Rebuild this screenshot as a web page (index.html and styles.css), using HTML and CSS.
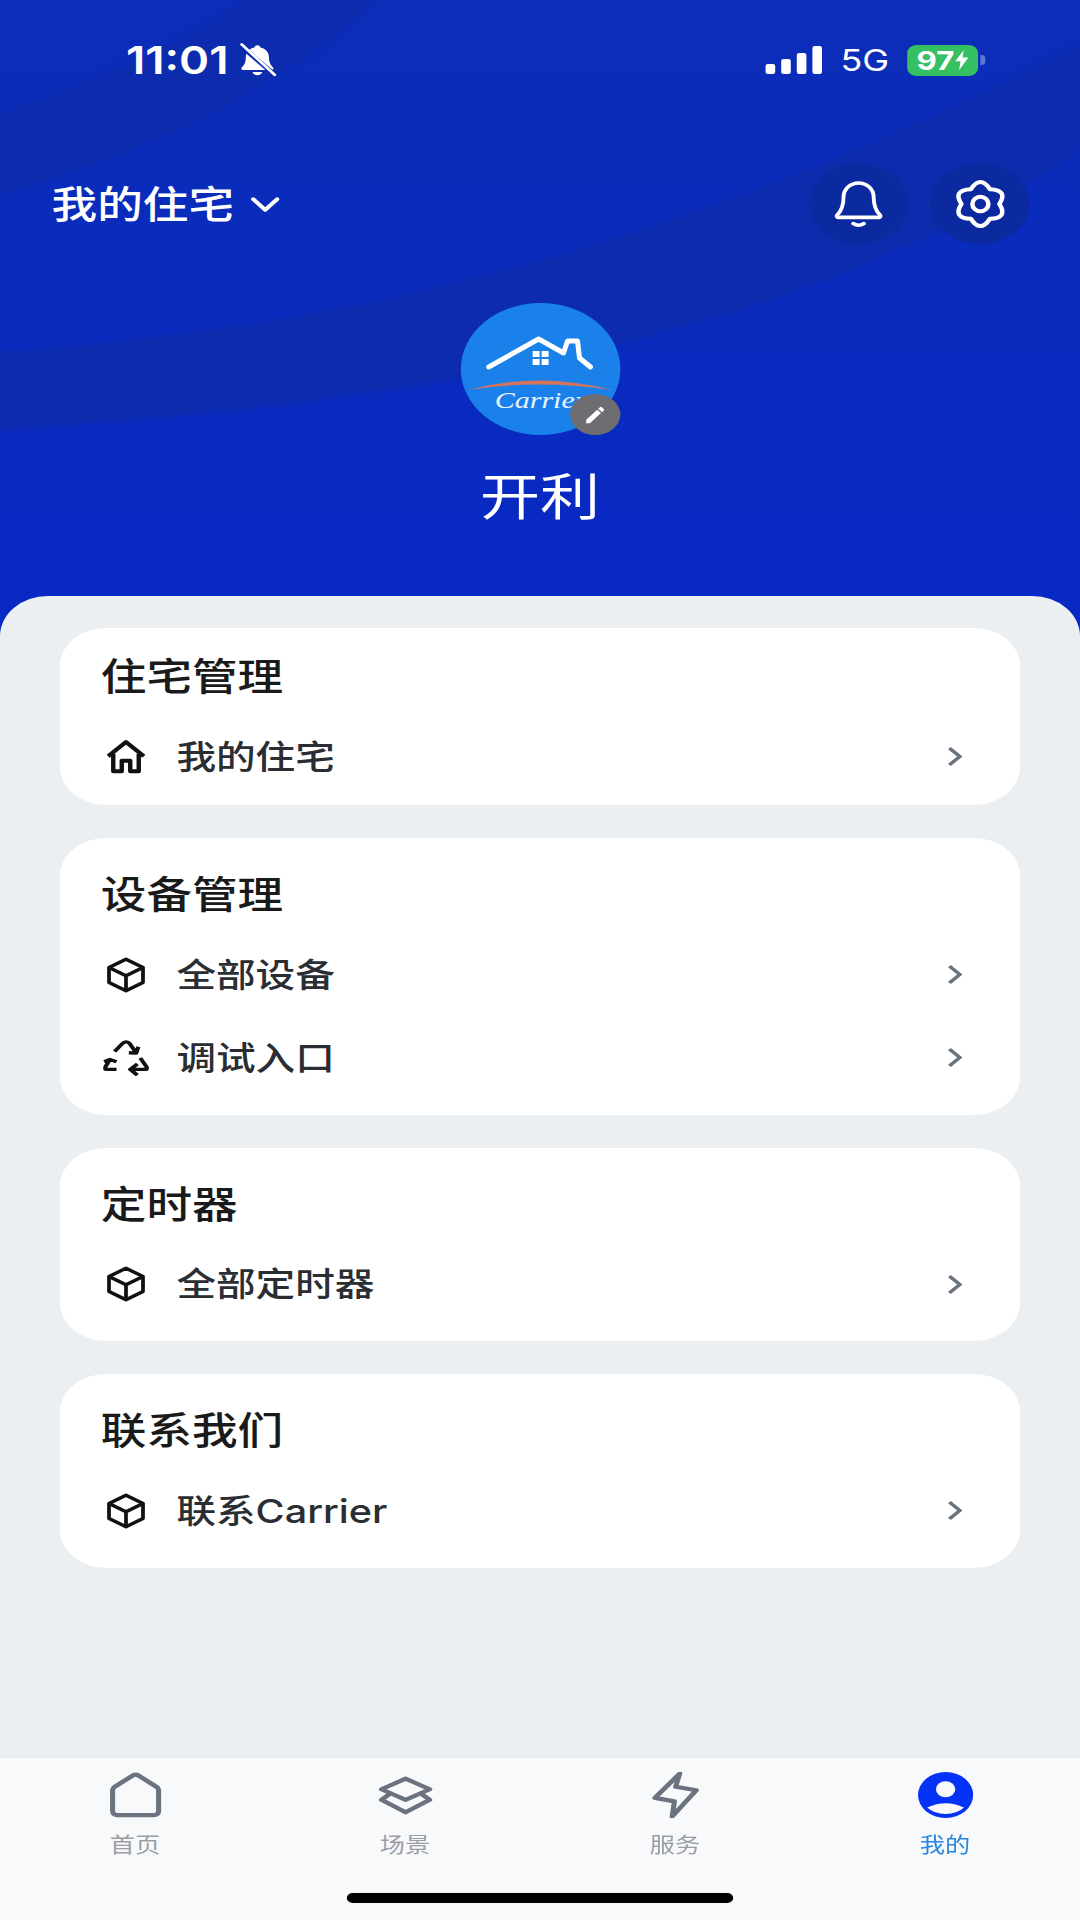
FILE: index.html
```html
<!DOCTYPE html>
<html lang="zh-CN">
<head>
    <meta charset="UTF-8">
    <meta name="viewport" content="width=device-width, initial-scale=1.0">
    <title>我的</title>
    <link rel="stylesheet" href="styles.css">
</head>
<body>
<div class="app">
    <header class="hero">
        <!-- darker sweeps behind the header -->
        <svg class="hero-bands" viewBox="0 0 1080 596" preserveAspectRatio="none" aria-hidden="true">
            <path class="band" d="M0 113C90 85 175 45 250 0H375C300 70 190 140 0 195Z"/>
            <path class="band" d="M0 352C300 330 640 270 1080 45V150C800 340 400 405 0 430Z"/>
        </svg>

        <div class="status-bar">
            <div class="status-left">
                <span class="clock">11:01</span>
                <svg class="icon-muted" viewBox="0 0 24 24" preserveAspectRatio="none">
                    <path fill="#fff" d="M12 1.500c1 0 1.700.7 1.800 1.600 3.300.8 5.200 3.500 5.200 7 0 3.500.8 5.500 2.500 7.200.6.7.2 1.700-.8 1.700H3.300c-1 0-1.400-1-.8-1.700C4.200 15.600 5 13.600 5 10.100c0-3.500 1.900-6.200 5.200-7C10.300 2.200 11 1.500 12 1.500zM9 20.500h6c-.3 1.300-1.500 2.200-3 2.200s-2.700-.9-3-2.200z"/>
                    <path stroke="#0c2bb0" stroke-width="3.200" d="M1 1l22 22"/>
                    <path stroke="#fff" stroke-width="1.800" stroke-linecap="round" d="M2.500 1l20 21.500"/>
                </svg>
            </div>
            <div class="status-right">
                <div class="signal">
                    <span class="signal-bar bar-1"></span>
                    <span class="signal-bar bar-2"></span>
                    <span class="signal-bar bar-3"></span>
                    <span class="signal-bar bar-4"></span>
                </div>
                <span class="network">5G</span>
                <div class="battery">
                    <span class="battery-level">97</span>
                    <svg class="icon-charge" viewBox="0 0 10 16" preserveAspectRatio="none">
                        <path fill="#fff" d="M6.500 0L0 9h4l-1 7 7-10H5.500z"/>
                    </svg>
                </div>
                <span class="battery-nub"></span>
            </div>
        </div>

        <div class="top-bar">
            <div class="home-switch">
                <span class="home-name">我的住宅</span>
                <svg class="icon-down" viewBox="0 0 24 14" preserveAspectRatio="none">
                    <path d="M2 2l10 10L22 2"/>
                </svg>
            </div>
            <div class="top-actions">
                <button class="round-btn">
                    <svg class="icon-bell" viewBox="0 0 24 24" preserveAspectRatio="none">
                        <path d="M12 1.500a7 7 0 0 0-7 7c0 4.500-1 7-3 9a.7.7 0 0 0 .5 1.200h19a.7.7 0 0 0 .5-1.200c-2-2-3-4.500-3-9a7 7 0 0 0-7-7z"/>
                        <path d="M9.500 21.800c1.500 1 3.500 1 5 0"/>
                    </svg>
                </button>
                <button class="round-btn">
                    <svg class="icon-gear" viewBox="0 0 24 24" preserveAspectRatio="none">
                        <path d="M8.200 5.400Q12-1 15.800 5.400Q23.200 5.800 19.600 12Q23.200 18.200 15.800 18.600Q12 25 8.200 18.600Q.8 18.200 4.400 12Q.8 5.800 8.200 5.400Z"/>
                        <circle cx="12" cy="12" r="3.200"/>
                    </svg>
                </button>
            </div>
        </div>

        <div class="profile">
            <div class="avatar">
                <svg class="avatar-logo" viewBox="0 0 160 132" preserveAspectRatio="none">
                    <path class="roof" d="M28 64L78 36L103 50L107 38H117L119 55L130 64"/>
                    <path class="window" d="M72 48h7v6h-7zM81 48h7v6h-7zM72 56h7v6h-7zM81 56h7v6h-7z"/>
                    <path class="swoosh" d="M7 87Q78 68 152 87Q78 76 7 87Z"/>
                    <text class="logo-text" x="34" y="105" textLength="92" lengthAdjust="spacingAndGlyphs">Carrier</text>
                </svg>
                <div class="edit-badge">
                    <svg class="icon-pencil" viewBox="0 0 24 24" preserveAspectRatio="none">
                        <path d="M3 17.250V21h3.750L17.810 9.940l-3.750-3.750L3 17.250zM20.710 7.040a1 1 0 0 0 0-1.410l-2.340-2.340a1 1 0 0 0-1.410 0l-1.830 1.830 3.750 3.750 1.830-1.830z"/>
                    </svg>
                </div>
            </div>
            <div class="profile-name">开利</div>
        </div>
    </header>

    <main class="sheet">
        <section class="card card-compact">
            <h2 class="card-title">住宅管理</h2>
            <div class="row">
                <svg class="row-icon icon-house" viewBox="0 0 24 24" preserveAspectRatio="none">
                    <path d="M1.500 11.500L12 2l10.500 9.500"/>
                    <path d="M4.500 10v11.500h5v-7h5v7h5V10"/>
                </svg>
                <span class="row-text">我的住宅</span>
                <svg class="chevron" viewBox="0 0 12 20" preserveAspectRatio="none"><path d="M2 2l8 8-8 8"/></svg>
            </div>
        </section>

        <section class="card">
            <h2 class="card-title">设备管理</h2>
            <div class="row">
                <svg class="row-icon" viewBox="0 0 24 24" preserveAspectRatio="none">
                    <path d="M12 1.500l10 5.500v10l-10 5.500L2 17V7z"/>
                    <path d="M2 7l10 5.500L22 7M12 12.500v10"/>
                </svg>
                <span class="row-text">全部设备</span>
                <svg class="chevron" viewBox="0 0 12 20" preserveAspectRatio="none"><path d="M2 2l8 8-8 8"/></svg>
            </div>
            <div class="row">
                <svg class="row-icon icon-recycle" viewBox="0 0 24 24" preserveAspectRatio="none">
                    <path d="M6 7.600L10 2.500q2.400-2.400 4 0L17.400 8.700M13.500 8.500l3.900.2L18.500 4.500"/>
                    <path d="M7 19.600H2q-1.800 0-.8-1.800l2.300-4.800M0.500 14.500l3-1.500 3.500 1.500"/>
                    <path d="M19.500 12l3.300 5.800q1 1.800-.8 1.800h-7.800M18 16l-3.800 3.600L18 23.500"/>
                </svg>
                <span class="row-text">调试入口</span>
                <svg class="chevron" viewBox="0 0 12 20" preserveAspectRatio="none"><path d="M2 2l8 8-8 8"/></svg>
            </div>
        </section>

        <section class="card">
            <h2 class="card-title">定时器</h2>
            <div class="row">
                <svg class="row-icon" viewBox="0 0 24 24" preserveAspectRatio="none">
                    <path d="M12 1.500l10 5.500v10l-10 5.500L2 17V7z"/>
                    <path d="M2 7l10 5.500L22 7M12 12.500v10"/>
                </svg>
                <span class="row-text">全部定时器</span>
                <svg class="chevron" viewBox="0 0 12 20" preserveAspectRatio="none"><path d="M2 2l8 8-8 8"/></svg>
            </div>
        </section>

        <section class="card">
            <h2 class="card-title">联系我们</h2>
            <div class="row">
                <svg class="row-icon" viewBox="0 0 24 24" preserveAspectRatio="none">
                    <path d="M12 1.500l10 5.500v10l-10 5.500L2 17V7z"/>
                    <path d="M2 7l10 5.500L22 7M12 12.500v10"/>
                </svg>
                <span class="row-text">联系Carrier</span>
                <svg class="chevron" viewBox="0 0 12 20" preserveAspectRatio="none"><path d="M2 2l8 8-8 8"/></svg>
            </div>
        </section>
    </main>

    <nav class="tab-bar">
        <div class="tabs">
            <div class="tab">
                <svg class="tab-icon" viewBox="0 0 24 24" preserveAspectRatio="none">
                    <path d="M10.800 1.800a2 2 0 0 1 2.400 0l8 6a2 2 0 0 1 .8 1.600V20.500a2 2 0 0 1-2 2H4a2 2 0 0 1-2-2V9.400a2 2 0 0 1 .8-1.600z"/>
                </svg>
                <span class="tab-label">首页</span>
            </div>
            <div class="tab">
                <svg class="tab-icon" viewBox="0 0 24 24" preserveAspectRatio="none">
                    <path d="M12 3.500L22.500 9 12 14.500 1.500 9z"/>
                    <path d="M5 11.500L1.500 14.500 12 21 22.500 14.500 19 11.500"/>
                </svg>
                <span class="tab-label">场景</span>
            </div>
            <div class="tab">
                <svg class="tab-icon" viewBox="0 0 24 24" preserveAspectRatio="none">
                    <path d="M13.800 .8L3 13.500l8.500 1.800-1 7.900L21 9.500l-9-1.800z"/>
                </svg>
                <span class="tab-label">服务</span>
            </div>
            <div class="tab tab-active">
                <svg class="tab-icon" viewBox="0 0 24 24" preserveAspectRatio="none">
                    <circle class="me-disc" cx="12" cy="12" r="12"/>
                    <circle class="me-cut" cx="12" cy="9" r="4.200"/>
                    <path class="me-cut" d="M4 18.500q8-4.500 16 0q-3 3.400-8 3.400t-8-3.400z"/>
                </svg>
                <span class="tab-label">我的</span>
            </div>
        </div>
        <div class="home-indicator"></div>
    </nav>
</div>
</body>
</html>
```

FILE: styles.css
```css
/* Global styles */
html, body {
    margin: 0;
    padding: 0;
    height: 1920px;
    overflow: hidden;
    background-color: #0a2cbd;
    font-family: Inter, "Noto Sans CJK SC", sans-serif;
}

/* Screen is laid out 900 wide and widened to the 1080 device */
.app {
    display: flex;
    flex-direction: column;
    width: 900px;
    height: 1920px;
    transform: scaleX(1.2);
    transform-origin: 0 0;
}

/* Header */
.hero {
    position: relative;
    flex: none;
    height: 640px;
    margin-bottom: -44px;
    overflow: hidden;
    color: #fff;
    background: linear-gradient(#0b2db7, #0829c4);
}
.hero-bands {
    position: absolute;
    top: 0;
    left: 0;
    width: 100%;
    height: 596px;
    filter: blur(2px);
}
.band {
    fill: #0c2bad;
}

.status-bar {
    position: relative;
    display: flex;
    justify-content: space-between;
    align-items: center;
    height: 120px;
    padding: 0 79px 0 105px;
}
.status-left,
.status-right {
    display: flex;
    align-items: center;
}
.clock {
    font-size: 38px;
    font-weight: 600;
}
.icon-muted {
    width: 33px;
    height: 34px;
    margin-left: 8px;
}
.signal {
    display: flex;
    align-items: flex-end;
    gap: 5px;
    height: 28px;
}
.signal-bar {
    width: 8px;
    background-color: #fff;
    border-radius: 2px;
}
.bar-1 { height: 10px; }
.bar-2 { height: 15px; }
.bar-3 { height: 21px; }
.bar-4 { height: 28px; }
.network {
    margin-left: 15px;
    font-size: 30px;
    font-weight: 400;
}
.battery {
    display: flex;
    align-items: center;
    justify-content: center;
    gap: 1px;
    width: 59px;
    height: 31px;
    margin-left: 15px;
    background-color: #35c163;
    border-radius: 8px;
}
.battery-level {
    font-size: 26px;
    font-weight: 700;
}
.icon-charge {
    width: 11px;
    height: 20px;
}
.battery-nub {
    width: 4px;
    height: 10px;
    margin-left: 2px;
    background-color: #5f78d6;
    border-radius: 0 3px 3px 0;
}

.top-bar {
    position: relative;
    display: flex;
    justify-content: space-between;
    align-items: center;
    margin-top: 44px;
    padding: 0 42px 0 43px;
}
.home-switch {
    display: flex;
    align-items: center;
    font-size: 38px;
    font-weight: 500;
}
.home-name {
    padding-bottom: 6px;
}
.icon-down {
    width: 24px;
    height: 15px;
    margin-left: 14px;
    fill: none;
    stroke: #fff;
    stroke-width: 3.500;
    stroke-linecap: round;
    stroke-linejoin: round;
}
.top-actions {
    display: flex;
    gap: 18px;
}
.round-btn {
    display: flex;
    align-items: center;
    justify-content: center;
    width: 83px;
    height: 80px;
    padding: 0;
    background-color: #0c2a9f;
    border: none;
    border-radius: 50%;
}
.icon-bell {
    width: 43px;
    height: 48px;
    fill: none;
    stroke: #fff;
    stroke-width: 1.800;
    stroke-linecap: round;
    stroke-linejoin: round;
}
.icon-gear {
    width: 50px;
    height: 54px;
    fill: none;
    stroke: #fff;
    stroke-width: 1.800;
    stroke-linejoin: round;
}

.profile {
    position: relative;
    display: flex;
    flex-direction: column;
    align-items: center;
    margin-top: 59px;
}
.avatar {
    position: relative;
    width: 133px;
    height: 132px;
    background-color: #1a80ea;
    border-radius: 50%;
}
.avatar-logo {
    display: block;
    width: 100%;
    height: 100%;
}
.roof {
    fill: none;
    stroke: #fff;
    stroke-width: 5;
    stroke-linecap: round;
    stroke-linejoin: round;
}
.window {
    fill: #fff;
}
.swoosh {
    fill: #d3745c;
}
.logo-text {
    fill: #eaf4ff;
    font-family: "Liberation Serif", serif;
    font-style: italic;
    font-size: 24px;
}
.edit-badge {
    position: absolute;
    right: 0;
    bottom: 0;
    display: flex;
    align-items: center;
    justify-content: center;
    width: 42px;
    height: 41px;
    background-color: #6e6e72;
    border-radius: 50%;
}
.icon-pencil {
    width: 20px;
    height: 22px;
    fill: #fff;
}
.profile-name {
    margin-top: 27px;
    font-size: 50px;
    line-height: 70px;
    font-weight: 400;
}

/* Cards */
.sheet {
    position: relative;
    display: flex;
    flex: 1;
    flex-direction: column;
    gap: 33px;
    padding: 32px 50px 0;
    background-color: #ebeff2;
    border-radius: 40px 40px 0 0;
}
.card {
    padding: 24px 0 15.500px;
    background-color: #fff;
    border-radius: 38px;
}
.card-compact {
    padding: 16px 0 7px;
}
.card-title {
    margin: 0 0 7px;
    padding-left: 34px;
    font-size: 38px;
    line-height: 64px;
    font-weight: 500;
    color: #1a1a1a;
}
.row {
    display: flex;
    align-items: center;
    height: 83px;
    padding: 0 48px 0 38px;
}
.row-icon {
    flex: none;
    width: 34px;
    height: 36px;
    fill: none;
    stroke: #111;
    stroke-width: 2.200;
    stroke-linejoin: round;
}
.icon-house {
    stroke-width: 2.600;
}
.icon-recycle {
    width: 38px;
    margin: 0 -2px;
}
.row-text {
    flex: 1;
    margin: 0 0 4px 25px;
    font-size: 33px;
    font-weight: 500;
    color: #2a2e33;
}
.chevron {
    flex: none;
    width: 13px;
    height: 21px;
    fill: none;
    stroke: #6b7280;
    stroke-width: 3;
}

/* Bottom tabs */
.tab-bar {
    position: relative;
    flex: none;
    height: 163px;
    box-sizing: border-box;
    background-color: #f8f9fb;
    border-top: 1px solid #e5e7eb;
}
.tabs {
    display: grid;
    grid-template-columns: repeat(4, 1fr);
    padding-top: 14px;
}
.tab {
    display: flex;
    flex-direction: column;
    align-items: center;
}
.tab-icon {
    width: 46px;
    height: 46px;
    fill: none;
    stroke: #6b7280;
    stroke-width: 2.200;
    stroke-linejoin: round;
}
.tab-label {
    margin-top: 13px;
    font-size: 21px;
    line-height: 28px;
    color: #9a9ea3;
}
.tab-active .tab-icon {
    stroke: none;
}
.tab-active .tab-label {
    color: #2a86e0;
}
.me-disc {
    fill: #0533f5;
}
.me-cut {
    fill: #f8f9fb;
}
.home-indicator {
    width: 322px;
    height: 10px;
    margin: 34px auto 0;
    background-color: #000;
    border-radius: 5px;
}
```
